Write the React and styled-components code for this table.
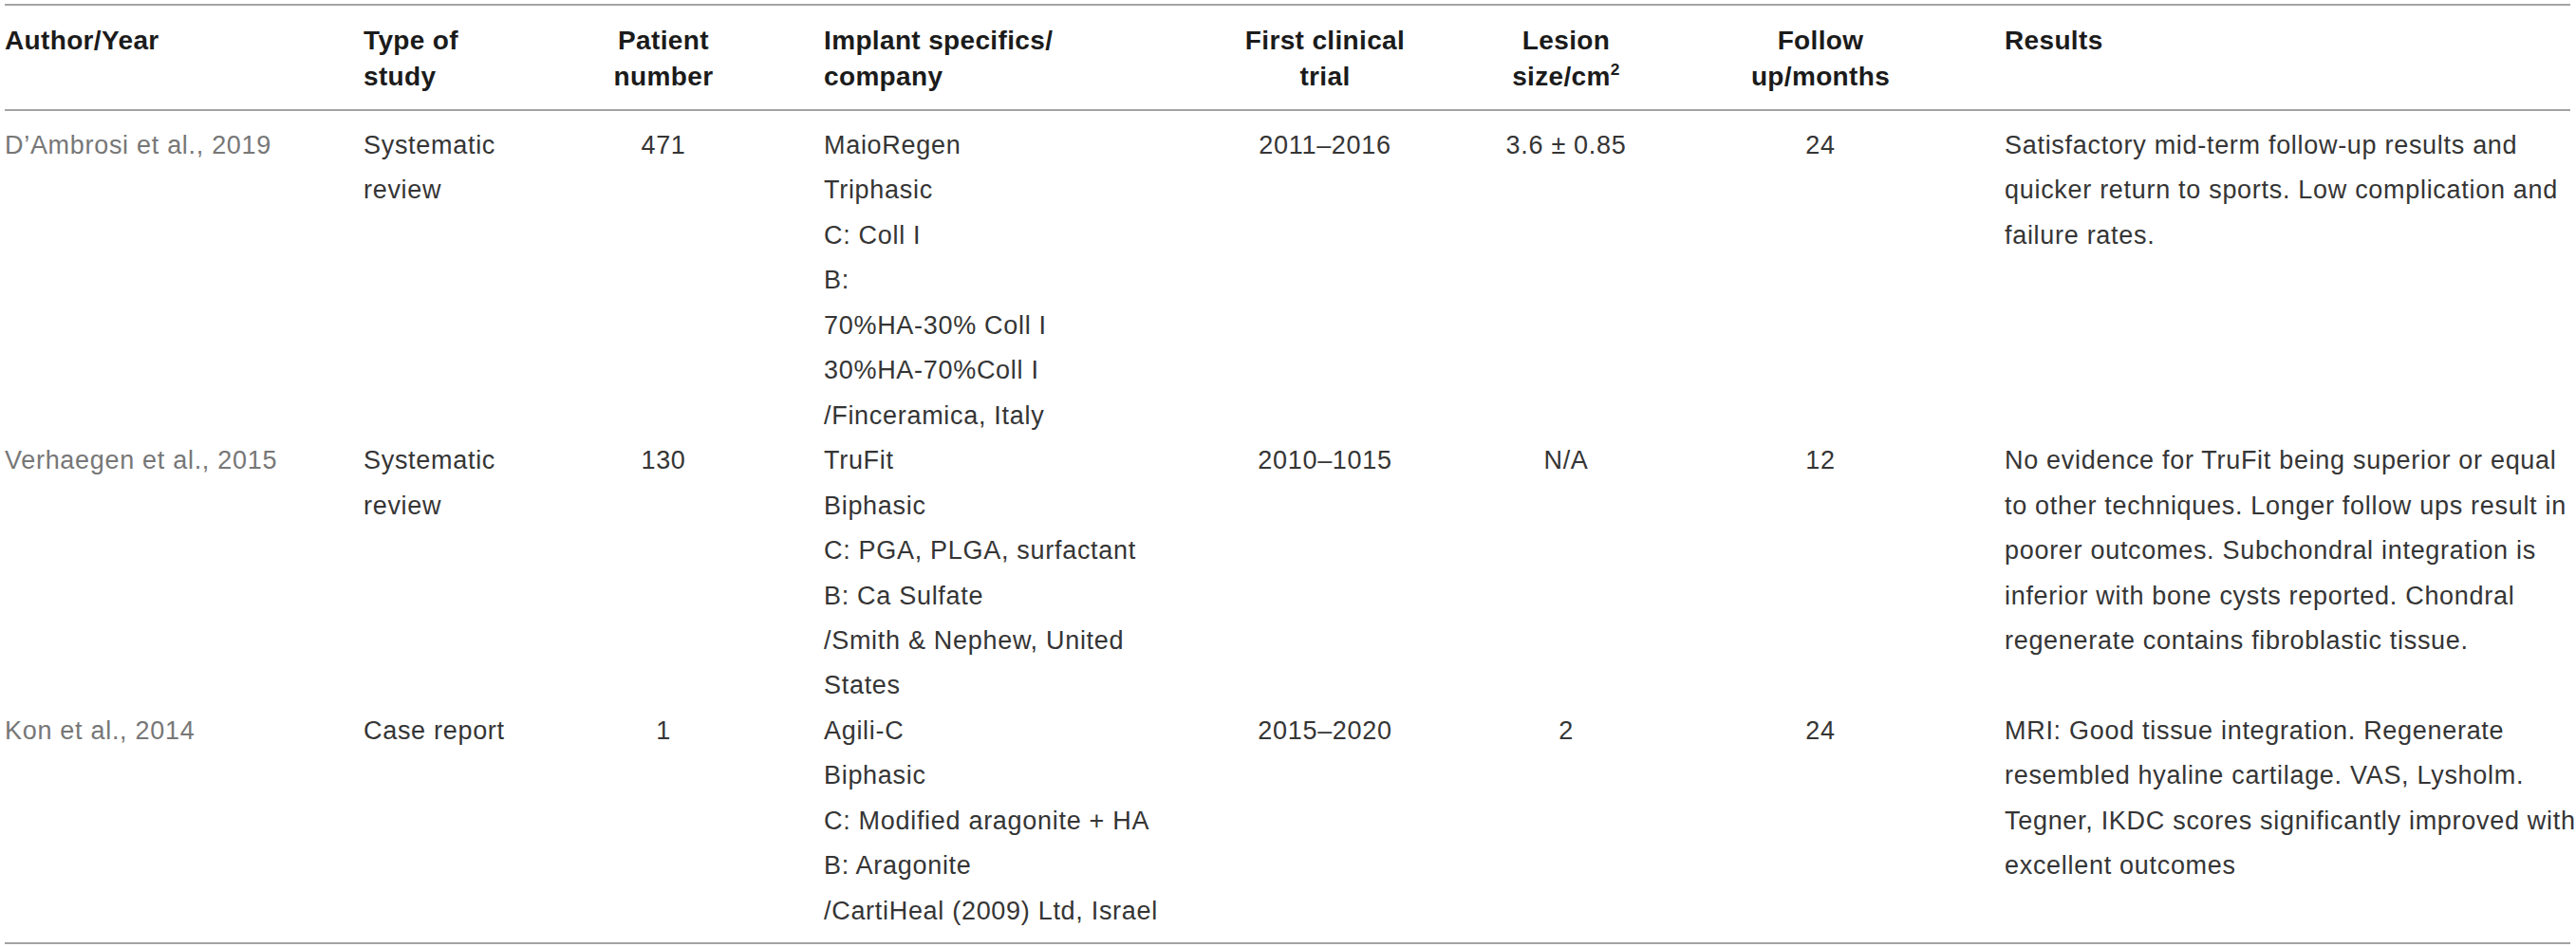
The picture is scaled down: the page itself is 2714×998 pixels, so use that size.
import React from "react";
import styled, { createGlobalStyle } from "styled-components";

const GlobalStyle = createGlobalStyle`
  html, body { margin: 0; padding: 0; background: #ffffff; }
  body { font-family: "Liberation Sans", Arial, Helvetica, sans-serif; }
`;

const COLUMNS = "363px 177px 308px 378px 330px 178px 358px 611px";

const Page = styled.div`
  padding: 4px 0 0 5px;
  width: 2703px;
`;

const Table = styled.div`
  border-top: 2px solid #a3a3a3;
  border-bottom: 2px solid #a3a3a3;
`;

const HeadRow = styled.div`
  display: grid;
  grid-template-columns: ${COLUMNS};
  padding: 18px 0 15px;
  border-bottom: 2px solid #a3a3a3;
`;

const Body = styled.div`
  padding: 13px 0 9px;
`;

const BodyRow = styled.div`
  display: grid;
  grid-template-columns: ${COLUMNS};
`;

const Cell = styled.div`
  padding: 0 15px;
  text-align: ${(p) => p.$align};
  &:first-child { padding-left: 0; }
`;

const HeadCell = styled(Cell)`
  font-size: 28px;
  font-weight: 700;
  line-height: 38px;
  letter-spacing: 0.35px;
  color: #1b1b1b;
`;

const DataCell = styled(Cell)`
  font-size: 27px;
  font-weight: 400;
  line-height: 47.45px;
  letter-spacing: 0.7px;
  color: ${(p) => (p.$muted ? "#777777" : "#353535")};
`;

const Line = styled.span`
  display: block;
  white-space: nowrap;
`;

const Sup = styled.sup`
  font-size: 0.62em;
  line-height: 0;
  vertical-align: 0.62em;
`;

const columns = [
  { align: "left", head: ["Author/Year"] },
  { align: "left", head: ["Type of", "study"] },
  { align: "center", head: ["Patient", "number"] },
  { align: "left", head: ["Implant specifics/", "company"] },
  { align: "center", head: ["First clinical", "trial"] },
  { align: "center", head: ["Lesion", <>size/cm<Sup>2</Sup></>] },
  { align: "center", head: ["Follow", "up/months"] },
  { align: "left", head: ["Results"] },
];

const rows = [
  [
    ["D\u2019Ambrosi et al., 2019"],
    ["Systematic", "review"],
    ["471"],
    [
      "MaioRegen",
      "Triphasic",
      "C: Coll I",
      "B:",
      "70%HA-30% Coll I",
      "30%HA-70%Coll I",
      "/Finceramica, Italy",
    ],
    ["2011\u20132016"],
    ["3.6 \u00b1 0.85"],
    ["24"],
    [
      "Satisfactory mid-term follow-up results and",
      "quicker return to sports. Low complication and",
      "failure rates.",
    ],
  ],
  [
    ["Verhaegen et al., 2015"],
    ["Systematic", "review"],
    ["130"],
    [
      "TruFit",
      "Biphasic",
      "C: PGA, PLGA, surfactant",
      "B: Ca Sulfate",
      "/Smith & Nephew, United",
      "States",
    ],
    ["2010\u20131015"],
    ["N/A"],
    ["12"],
    [
      "No evidence for TruFit being superior or equal",
      "to other techniques. Longer follow ups result in",
      "poorer outcomes. Subchondral integration is",
      "inferior with bone cysts reported. Chondral",
      "regenerate contains fibroblastic tissue.",
    ],
  ],
  [
    ["Kon et al., 2014"],
    ["Case report"],
    ["1"],
    [
      "Agili-C",
      "Biphasic",
      "C: Modified aragonite + HA",
      "B: Aragonite",
      "/CartiHeal (2009) Ltd, Israel",
    ],
    ["2015\u20132020"],
    ["2"],
    ["24"],
    [
      "MRI: Good tissue integration. Regenerate",
      "resembled hyaline cartilage. VAS, Lysholm.",
      "Tegner, IKDC scores significantly improved with",
      "excellent outcomes",
    ],
  ],
];

export default function App() {
  return (
    <Page>
      <GlobalStyle />
      <Table>
        <HeadRow>
          {columns.map((c, i) => (
            <HeadCell key={i} $align={c.align}>
              {c.head.map((l, j) => (
                <Line key={j}>{l}</Line>
              ))}
            </HeadCell>
          ))}
        </HeadRow>
        <Body>
          {rows.map((r, ri) => (
            <BodyRow key={ri}>
              {r.map((lines, ci) => (
                <DataCell key={ci} $align={columns[ci].align} $muted={ci === 0}>
                  {lines.map((l, li) => (
                    <Line key={li}>{l}</Line>
                  ))}
                </DataCell>
              ))}
            </BodyRow>
          ))}
        </Body>
      </Table>
    </Page>
  );
}
